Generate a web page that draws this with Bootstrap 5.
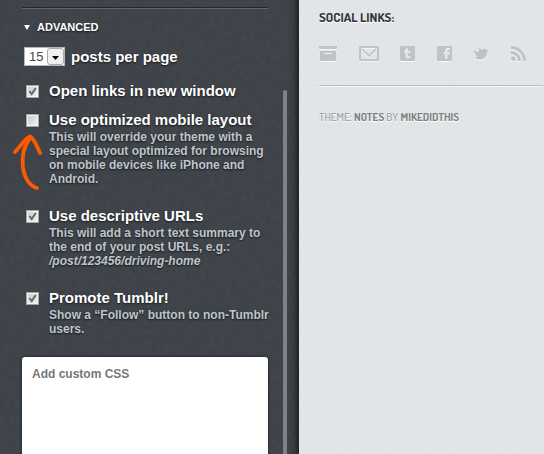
<!DOCTYPE html>
<html lang="en">
<head>
<meta charset="utf-8">
<meta name="viewport" content="width=device-width, initial-scale=1">
<title>Customize theme</title>
<link href="https://cdn.jsdelivr.net/npm/bootstrap@5.3.0/dist/css/bootstrap.min.css" rel="stylesheet">
<style>
body { font-family: "Liberation Sans", Arial, sans-serif; background: #dfe3e5; }
.panel {
  flex: 0 0 299px;
  padding: 7px 12px 0 22px;
  gap: 15px;
  color: #fff;
  font-weight: 700;
  background-color: #42474d;
  background-image:
    linear-gradient(to left, rgba(0,0,0,.5), rgba(0,0,0,.15) 5px, transparent 12px),
    url("data:image/svg+xml,%3Csvg xmlns='http://www.w3.org/2000/svg' width='160' height='160'%3E%3Cfilter id='n'%3E%3CfeTurbulence type='fractalNoise' baseFrequency='.2' numOctaves='3' stitchTiles='stitch'/%3E%3CfeColorMatrix values='0 0 0 0 0 0 0 0 0 0 0 0 0 0 0 .12 0 0 0 -.02'/%3E%3C/filter%3E%3Crect width='160' height='160' filter='url(%23n)'/%3E%3C/svg%3E");
  text-shadow: 0 1px 2px rgba(0,0,0,.7);
}
.settings { min-width: 0; }
.rule-dark { height: 2px; background: linear-gradient(#24282c 50%, #60656a 50%); }
.section-title { font-size: 11px; line-height: 14px; padding: 11px 0 13px 2px; gap: 7px; margin: 0; font-weight: 700; }
.page-count { padding-left: 2px; gap: 6px; font-size: 15px; line-height: 18px; margin-bottom: 16px; }
.count-select {
  appearance: none; width: 41px; height: 19px; padding: 0 0 0 4px;
  border: 1px solid #b5b9bc; border-radius: 0; color: #444; font-size: 13px; line-height: 17px;
  background: #fff url("data:image/svg+xml,%3Csvg xmlns='http://www.w3.org/2000/svg' width='17' height='17'%3E%3Crect x='.5' y='.5' width='16' height='16' rx='2.5' fill='%23f0f0f0' stroke='%23aaa'/%3E%3Cpath d='M5 8h7l-3.500 4z' fill='%23000'/%3E%3C/svg%3E") right 0 center no-repeat;
}
.option-row { padding-left: 4px; gap: 10px; }
.option-title { font-size: 15px; line-height: 18px; }
.option-note { font-size: 12px; line-height: 14px; color: #bfc6cb; margin: 1px -8px 0 0; }
.tick {
  appearance: none; flex: none; width: 13px; height: 13px; margin: 3px 0 0;
  border: 1px solid #a0a3a5; box-shadow: inset 0 0 0 1px #f5f5f5;
  background: linear-gradient(135deg, #c4c7ca, #f2f2f2) center no-repeat;
}
.tick:checked {
  background: url("data:image/svg+xml,%3Csvg xmlns='http://www.w3.org/2000/svg' width='11' height='11'%3E%3Cpath d='M2.500 5l2.200 3L8.800 2' fill='none' stroke='%23666' stroke-width='2'/%3E%3C/svg%3E") center no-repeat, linear-gradient(135deg, #c8cacc, #f2f2f2);
}
.option-list { gap: 21px; }
.first-options { gap: 11px; }
.hint-arrow { position: absolute; left: -9px; top: 22px; }
.css-box {
  height: 140px; padding: 10px; margin-top: 21px; border: 0; border-radius: 3px; resize: none;
  font-size: 12px; line-height: 14px; font-weight: 700; box-shadow: 0 0 3px rgba(0,0,0,.7);
}
.css-box::placeholder { color: #777; }
.scroll-thumb { flex: 0 0 4px; margin-top: 83px; border-radius: 2px 2px 0 0; background: #808386; }
.preview {
  min-width: 0; padding: 8px 1px 0 20px; color: #999;
  font-family: Dosis, "Roboto Condensed", "Open Sans Condensed", Roboto, sans-serif;
  background: #dfe3e5 url("data:image/svg+xml,%3Csvg xmlns='http://www.w3.org/2000/svg' width='160' height='160'%3E%3Cfilter id='n'%3E%3CfeTurbulence type='fractalNoise' baseFrequency='.6' numOctaves='2' stitchTiles='stitch'/%3E%3CfeColorMatrix values='0 0 0 0 1 0 0 0 0 1 0 0 0 0 1 .4 0 0 0 -.13'/%3E%3C/filter%3E%3Crect width='160' height='160' filter='url(%23n)'/%3E%3C/svg%3E");
  text-shadow: 0 1px 0 #fff;
}
.preview-title { font-size: 13px; line-height: 18px; margin: 0 0 20px; font-weight: 700; color: #333; }
.social { padding-right: 16px; height: 15px; }
.social a { display: block; line-height: 0; color: #bdc3c6; filter: drop-shadow(0 1px 0 #f4f6f7); }
.rule-light { height: 2px; margin-top: 24px; background: linear-gradient(#b9bdbf 50%, #f3f5f6 50%); }
.credit { font-size: 11px; line-height: 16px; margin: 22px 0 0; font-weight: 500; }
.credit a { color: #808080; font-weight: 700; }
</style>
<script src="https://cdn.jsdelivr.net/npm/bootstrap@5.3.0/dist/js/bootstrap.bundle.min.js"></script>
</head>
<body>
<div class="d-flex vh-100 overflow-hidden">
  <aside class="panel d-flex">
    <form class="settings flex-grow-1">
      <div class="rule-dark"></div>
      <h2 class="section-title d-flex align-items-center">
        <svg width="6" height="5" viewBox="0 0 6 5" aria-hidden="true"><path d="M0 0h6L3 5z" fill="#fff"/></svg>ADVANCED
      </h2>
      <div class="page-count d-flex align-items-center">
        <select class="count-select" id="count"><option>15</option><option>10</option><option>5</option></select>
        <label for="count">posts per page</label>
      </div>
      <div class="option-list d-flex flex-column">
        <div class="first-options d-flex flex-column">
          <div class="option-row d-flex align-items-start">
            <input class="tick" type="checkbox" id="links" checked>
            <label class="option-title" for="links">Open links in new window</label>
          </div>
          <div class="option-row d-flex align-items-start position-relative">
            <input class="tick" type="checkbox" id="mobile">
            <div>
              <label class="option-title d-block" for="mobile">Use optimized mobile layout</label>
              <p class="option-note">This will override your theme with a special layout optimized for browsing on mobile devices like iPhone and Android.</p>
            </div>
            <svg class="hint-arrow" width="30" height="58" viewBox="0 0 30 58" fill="none" stroke="#ff5a00" stroke-linecap="round" stroke-linejoin="round" aria-hidden="true">
              <path d="M2 19C7 14 12 5 17 3.500C21 5 24 14 27 20" stroke-width="3.800"/>
              <path d="M17 5C11 13 8.500 24 10 35C12 46 17 53 24 55" stroke-width="3.800"/>
            </svg>
          </div>
        </div>
        <div class="option-row d-flex align-items-start">
          <input class="tick" type="checkbox" id="urls" checked>
          <div>
            <label class="option-title d-block" for="urls">Use descriptive URLs</label>
            <p class="option-note">This will add a short text summary to the end of your post URLs, e.g.: <em>/post/123456/driving-home</em></p>
          </div>
        </div>
        <div class="option-row d-flex align-items-start">
          <input class="tick" type="checkbox" id="promote" checked>
          <div>
            <label class="option-title d-block" for="promote">Promote Tumblr!</label>
            <p class="option-note">Show a “Follow” button to non-Tumblr users.</p>
          </div>
        </div>
      </div>
      <textarea class="css-box d-block w-100" placeholder="Add custom CSS" aria-label="Add custom CSS"></textarea>
    </form>
    <div class="scroll-thumb"></div>
  </aside>
  <main class="preview flex-grow-1">
    <h2 class="preview-title">SOCIAL LINKS:</h2>
    <nav class="social d-flex justify-content-between" aria-label="Social links">
      <a href="#" aria-label="Archive"><svg width="18" height="15" fill="currentColor"><path fill-rule="evenodd" d="M0 0h18v3H0zM1 5h16v10H1zM5 7v1h8V7z"/></svg></a>
      <a href="#" aria-label="Email"><svg width="20" height="15" fill="none" stroke="currentColor"><rect x="1" y="1" width="18" height="13" rx=".5" stroke-width="2"/><path d="M3 3l7 7 7-7" stroke-width="1.600"/></svg></a>
      <a href="#" aria-label="Tumblr"><svg width="15" height="15" fill="currentColor"><path fill-rule="evenodd" d="M1.500 0h12A1.500 1.500 0 0 1 15 1.500v12a1.500 1.500 0 0 1-1.500 1.500h-12A1.500 1.500 0 0 1 0 13.500v-12A1.500 1.500 0 0 1 1.500 0zM6 2.500C6 4 5.300 4.800 4 5v2h1.400v3.200c0 2.200 2.600 2.800 5 1.800v-2c-1.400.7-2.400.5-2.400-.6V7h2.300V5H8V2.500z"/></svg></a>
      <a href="#" aria-label="Facebook"><svg width="15" height="15" fill="currentColor"><path fill-rule="evenodd" d="M.8 0h13.400l.8.800v13.400l-.8.800H.8l-.8-.8V.8zM8 13h2.500V8.500h2l.3-2.200h-2.300V5.200c0-.8.400-1.100 1.200-1.100h1.200V2.100h-1.800C9 2.100 8 3.200 8 4.900v1.400H6.500v2.200H8z"/></svg></a>
      <a href="#" aria-label="Twitter"><svg width="16" height="15" fill="currentColor"><path d="M0 4.500C2 5.500 4.500 5.500 6 6C6.200 4.500 5.500 2.800 5.200 2C7 2.500 8 3.200 8.800 4C9.800 2.600 12.600 2.400 13.600 4L16 4.200L14 6.400C14 10.500 11 13.500 7 13.500C4.500 13.500 2.500 12.500 1.500 11.400L4.500 10.800C3 10.400 2.400 9.500 2.200 8.600L3.700 8.500C2 7.500.5 6.500 0 4.500z"/></svg></a>
      <a href="#" aria-label="RSS"><svg width="16" height="15" fill="none" stroke="currentColor"><circle cx="2.200" cy="12.800" r="2.200" fill="currentColor" stroke="none"/><path d="M0 6.500A8.500 8.500 0 0 1 8.500 15M0 1.500A13.500 13.500 0 0 1 13.500 15" stroke-width="2.800"/></svg></a>
    </nav>
    <div class="rule-light"></div>
    <p class="credit">THEME: <a class="text-decoration-none" href="#">NOTES</a> BY <a class="text-decoration-none" href="#">MIKEDIDTHIS</a></p>
  </main>
</div>
</body>
</html>
